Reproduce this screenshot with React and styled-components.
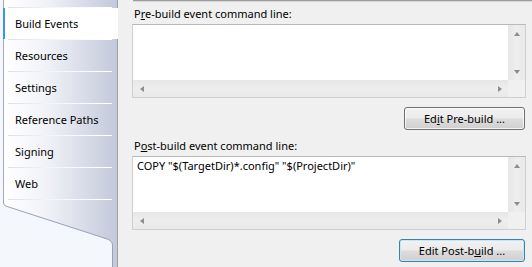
import React from "react";
import styled, { createGlobalStyle } from "styled-components";

const GlobalStyle = createGlobalStyle`
  html, body {
    margin: 0;
    padding: 0;
  }
  body {
    width: 532px;
    height: 267px;
    overflow: hidden;
    background: #f0f0f0;
    color: #000;
    font-family: "Noto Sans", "Segoe UI", sans-serif;
    font-size: 11px;
  }
`;

const Window = styled.div`
  display: flex;
  width: 532px;
  height: 267px;
  overflow: hidden;
`;

/* ---------- left tab list ---------- */

const Nav = styled.nav`
  flex: none;
  width: 117px;
  display: flex;
  flex-direction: column;
  border-right: 1px solid #a0a0a0;
  background: linear-gradient(
    to right,
    #f4f7fb 0,
    #f4f7fb 3px,
    #ffffff 4px,
    #f1f2f7 40%,
    #c3c9db 100%
  );
`;

const TabStrip = styled.ul`
  list-style: none;
  margin: 0 0 0 3px;
  padding: 7px 0 0 0;
  border-left: 1px solid #a4abbc;
`;

const Rule = styled.li`
  height: 1px;
  margin: 0 5px 0 4px;
  background: linear-gradient(to right, #dcdfe8, #f4f5f9 40%, #ffffff);
`;

const Tab = styled.li`
  position: relative;
  height: 31px;
  line-height: 31px;
  padding-left: 11px;
  white-space: nowrap;

  ${(p) =>
    p.$active &&
    `
    margin: 0 -1px 0 -1px;
    padding-left: 10px;
    background: #ffffff;
    border-left: 2px solid #3d95ea;
  `}
`;

const TailSvg = styled.svg`
  display: block;
  flex: 1;
`;

const Tail = () => (
  <TailSvg width="117" height="67" viewBox="0 0 117 67">
    <path
      d="M0 0 H3.5 V3 Q3.5 5.5 6.5 6.3 L106 38.6 Q112.5 40.6 112.5 45 V67 H0 Z"
      fill="#f4f7fb"
    />
    <path
      d="M3.5 0 V3 Q3.5 5.5 6.5 6.3 L106 38.6 Q112.5 40.6 112.5 45 V67"
      fill="none"
      stroke="#98a1b7"
      strokeWidth="1"
    />
  </TailSvg>
);

/* ---------- right page ---------- */

const Main = styled.main`
  flex: 1;
  display: flex;
  flex-direction: column;
  padding: 0 6px 0 14px;
  background: #f0f0f0;
`;

const TopRule = styled.div`
  height: 1px;
  margin: 0 -6px 0 1px;
  border-top: 1px solid #9d9d9d;
  background: #d6d6d6;
`;

const Label = styled.div`
  line-height: 16px;
  margin-top: ${(p) => p.$top}px;
  padding-left: 2px;
`;

const Key = styled.span`
  text-decoration: underline;
  text-underline-offset: 1px;
`;

const CommandBox = styled.div`
  box-sizing: border-box;
  height: 74px;
  margin-top: 2px;
  display: grid;
  grid-template-columns: 1fr 17px;
  grid-template-rows: 1fr 17px;
  border: 1px solid #cfcfcf;
  border-top-color: #b9b9b9;
  background: #ffffff;
`;

const CommandText = styled.div`
  padding: 1px 4px;
  line-height: 15px;
  white-space: nowrap;
  overflow: hidden;
`;

const VScroll = styled.div`
  display: flex;
  flex-direction: column;
  justify-content: space-between;
  background: linear-gradient(to right, #e6e6e6, #eeeeee 50%, #e9e9e9);
`;

const HScroll = styled.div`
  display: flex;
  justify-content: space-between;
  background: linear-gradient(to bottom, #e6e6e6, #eeeeee 50%, #e9e9e9);
`;

const Corner = styled.div`
  background: #f0f0f0;
`;

const ArrowCell = styled.div`
  width: 17px;
  height: 17px;
  display: flex;
  align-items: center;
  justify-content: center;
`;

const arrowBorders = {
  up: "border-left: 3.5px solid transparent; border-right: 3.5px solid transparent; border-bottom: 4px solid #8d8d8d;",
  down: "border-left: 3.5px solid transparent; border-right: 3.5px solid transparent; border-top: 4px solid #8d8d8d;",
  left: "border-top: 3.5px solid transparent; border-bottom: 3.5px solid transparent; border-right: 4px solid #8d8d8d;",
  right: "border-top: 3.5px solid transparent; border-bottom: 3.5px solid transparent; border-left: 4px solid #8d8d8d;",
};

const Arrow = styled.span`
  width: 0;
  height: 0;
  ${(p) => arrowBorders[p.$dir]}
`;

const ButtonRow = styled.div`
  display: flex;
  justify-content: flex-end;
  margin-top: 9px;
  padding-right: 1px;
`;

const Button = styled.button`
  box-sizing: border-box;
  width: ${(p) => p.$width}px;
  height: 23px;
  padding: 0;
  font: inherit;
  color: #000;
  border-radius: 3px;
  border: 1px solid ${(p) => (p.$default ? "#3c7fb1" : "#707070")};
  background: linear-gradient(
    to bottom,
    #f2f2f2 0%,
    #ebebeb 48%,
    #dddddd 52%,
    #cfcfcf 100%
  );
  box-shadow: inset 0 0 0 1px
    ${(p) => (p.$default ? "#c9e6f7" : "rgba(255, 255, 255, 0.75)")};
`;

const CommandField = ({ text }) => (
  <CommandBox>
    <CommandText>{text}</CommandText>
    <VScroll>
      <ArrowCell>
        <Arrow $dir="up" />
      </ArrowCell>
      <ArrowCell>
        <Arrow $dir="down" />
      </ArrowCell>
    </VScroll>
    <HScroll>
      <ArrowCell>
        <Arrow $dir="left" />
      </ArrowCell>
      <ArrowCell>
        <Arrow $dir="right" />
      </ArrowCell>
    </HScroll>
    <Corner />
  </CommandBox>
);

const tabs = [
  "Build Events",
  "Resources",
  "Settings",
  "Reference Paths",
  "Signing",
  "Web",
];

export default function App() {
  return (
    <>
      <GlobalStyle />
      <Window>
        <Nav>
          <TabStrip>
            {tabs.map((t, i) => (
              <React.Fragment key={t}>
                <Rule />
                <Tab $active={i === 0}>{t}</Tab>
              </React.Fragment>
            ))}
            <Rule />
          </TabStrip>
          <Tail />
        </Nav>

        <Main>
          <TopRule />
          <Label $top={4}>
            P<Key>r</Key>e-build event command line:
          </Label>
          <CommandField text="" />
          <ButtonRow>
            <Button $width={121}>
              Ed<Key>i</Key>t Pre-build ...
            </Button>
          </ButtonRow>

          <Label $top={8}>
            P<Key>o</Key>st-build event command line:
          </Label>
          <CommandField text={'COPY "$(TargetDir)*.config" "$(ProjectDir)"'} />
          <ButtonRow>
            <Button $width={126} $default>
              Edit Post-b<Key>u</Key>ild ...
            </Button>
          </ButtonRow>
        </Main>
      </Window>
    </>
  );
}
